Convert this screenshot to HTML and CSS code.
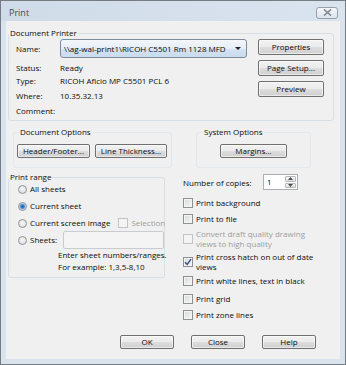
FILE: index.html
```html
<!DOCTYPE html>
<html lang="en">
<head>
    <meta charset="UTF-8">
    <meta name="viewport" content="width=device-width, initial-scale=1.0">
    <title>Print</title>
    <link rel="stylesheet" href="styles.css">
</head>
<body>
    <div class="window">
        <div class="titlebar">
            <span class="title">Print</span>
            <span class="close-btn">
                <svg width="9" height="7" viewBox="0 0 9 7"><path d="M1 0.5 L8 6.5 M8 0.5 L1 6.5" stroke="#7d8691" stroke-width="1.6" fill="none"/></svg>
            </span>
        </div>

        <div class="client">
            <fieldset class="group printer">
                <legend>Document Printer</legend>
                <div class="printer-body">
                    <div class="printer-info">
                        <span class="info-label name-label">Name:</span>
                        <div class="combo">
                            <span>\\ag-wal-print1\RICOH C5501 Rm 1128 MFD</span>
                            <span class="combo-arrow"></span>
                        </div>
                        <span class="info-label first">Status:</span><span class="info-value first">Ready</span>
                        <span class="info-label">Type:</span><span class="info-value">RICOH Aficio MP C5501 PCL 6</span>
                        <span class="info-label">Where:</span><span class="info-value">10.35.32.13</span>
                        <span class="info-label">Comment:</span><span class="info-value"></span>
                    </div>
                    <div class="printer-actions">
                        <button class="btn btn-side">Properties</button>
                        <button class="btn btn-side">Page Setup...</button>
                        <button class="btn btn-side">Preview</button>
                    </div>
                </div>
            </fieldset>

            <div class="options-row">
                <fieldset class="group doc-options">
                    <legend>Document Options</legend>
                    <button class="btn btn-header">Header/Footer...</button>
                    <button class="btn btn-thickness">Line Thickness...</button>
                </fieldset>
                <fieldset class="group sys-options">
                    <legend>System Options</legend>
                    <button class="btn btn-margins">Margins...</button>
                </fieldset>
            </div>

            <div class="lower">
                <fieldset class="group range">
                    <legend>Print range</legend>
                    <label class="radio-row"><span class="radio"></span>All sheets</label>
                    <label class="radio-row"><span class="radio checked"></span>Current sheet</label>
                    <label class="radio-row">
                        <span class="radio"></span>Current screen image
                        <span class="check disabled selection-box"></span><span class="muted">Selection</span>
                    </label>
                    <label class="radio-row sheets-row">
                        <span class="radio"></span>Sheets:
                        <span class="text-input"></span>
                    </label>
                    <p class="hint">Enter sheet numbers/ranges.<br>For example: 1,3,5-8,10</p>
                </fieldset>

                <div class="print-opts">
                    <div class="copies">
                        <span class="copies-label">Number of copies:</span>
                        <div class="spin">
                            <span class="spin-value">1</span>
                            <span class="spin-buttons">
                                <span class="spin-btn"><svg width="5" height="3" viewBox="0 0 5 3"><path d="M0 3 L2.5 0 L5 3 Z" fill="#4d4d4d"/></svg></span>
                                <span class="spin-btn"><svg width="5" height="3" viewBox="0 0 5 3"><path d="M0 0 L2.5 3 L5 0 Z" fill="#4d4d4d"/></svg></span>
                            </span>
                        </div>
                    </div>
                    <div class="check-list">
                        <label class="check-row"><span class="check"></span>Print background</label>
                        <label class="check-row"><span class="check"></span>Print to file</label>
                        <label class="check-row multi muted"><span class="check disabled"></span>Convert draft quality drawing views to high quality</label>
                        <label class="check-row multi">
                            <span class="check">
                                <svg width="8" height="8" viewBox="0 0 8 8"><path d="M1 4.2 L3.2 6.5 L7 1.2" stroke="#2c4c86" stroke-width="1.4" fill="none"/></svg>
                            </span>Print cross hatch on out of date views
                        </label>
                        <label class="check-row"><span class="check"></span>Print white lines, text in black</label>
                        <label class="check-row loose"><span class="check"></span>Print grid</label>
                        <label class="check-row"><span class="check"></span>Print zone lines</label>
                    </div>
                </div>
            </div>

            <div class="footer">
                <button class="btn btn-footer">OK</button>
                <button class="btn btn-footer">Close</button>
                <button class="btn btn-footer">Help</button>
            </div>
        </div>
    </div>
</body>
</html>
```

FILE: styles.css
```css
:root {
    --frame: #d9e3ee;
    --frame-edge: #767c84;
    --surface: #f0f0f0;
    --group-line: #d5dfe5;
    --text: #0a0a0a;
    --muted: #9d9d9d;
}

* {
    margin: 0;
    padding: 0;
    box-sizing: border-box;
}

body {
    font-family: "Open Sans", "Liberation Sans", sans-serif;
    font-size: 8px;
    color: var(--text);
    background: #fff;
}

.window {
    width: 346px;
    height: 365px;
    border: 1px solid var(--frame-edge);
    background: var(--frame);
    padding: 0 5px 5px;
    display: flex;
    flex-direction: column;
}

.titlebar {
    height: 20px;
    margin: 0 -5px;
    padding: 3px 7px 0 8px;
    display: flex;
    align-items: center;
    justify-content: space-between;
    background: linear-gradient(to right, #cfdbe8, #dae4ef);
}

.title {
    font-size: 9px;
    color: #454a50;
}

.close-btn {
    width: 22px;
    height: 12px;
    border: 1px solid #97a0aa;
    border-radius: 3px;
    background: linear-gradient(#f4f7fa, #dce4ec);
    display: flex;
    align-items: center;
    justify-content: center;
}

.client {
    flex: 1;
    background: var(--surface);
    padding: 0 6px 10px 2px;
    display: flex;
    flex-direction: column;
}

/* group boxes */
.group {
    border: 1px solid var(--group-line);
    border-radius: 3px;
    min-width: 0;
}

.group legend {
    line-height: 12px;
    padding: 0 1px;
}

.printer {
    margin-top: 6px;
    padding: 0 9px 2px 7px;
}

.printer legend {
    margin-left: -7px;
}

.printer-body {
    display: flex;
    justify-content: space-between;
}

.printer-info {
    display: grid;
    grid-template-columns: 44px 187px;
    grid-template-rows: 19px repeat(4, 15px);
    align-items: center;
}

.info-label.first,
.info-value.first {
    margin-top: 4px;
}

.combo {
    height: 19px;
    border: 1px solid #7d8b9b;
    border-radius: 3px;
    background: linear-gradient(#f4f7fb, #e6eef7 50%, #d5e3f2 50%, #c9dbee);
    display: flex;
    align-items: center;
    justify-content: space-between;
    padding: 0 5px 0 3px;
    white-space: nowrap;
}

.combo-arrow {
    width: 0;
    height: 0;
    border-left: 3px solid transparent;
    border-right: 3px solid transparent;
    border-top: 3px solid #222;
}

.printer-actions {
    display: flex;
    flex-direction: column;
    gap: 5px;
}

/* buttons */
.btn {
    font: inherit;
    color: var(--text);
    height: 14px;
    line-height: 12px;
    border: 1px solid #707070;
    border-radius: 2px;
    background: linear-gradient(#f2f2f2, #ebebeb 48%, #dddddd 52%, #cfcfcf);
    box-shadow: inset 0 0 0 1px rgba(255,255,255,0.55);
}

.btn-side {
    width: 66px;
    height: 16px;
}

.btn-header { width: 73px; }
.btn-thickness { width: 72px; margin-left: 5px; }
.btn-margins { width: 67px; }
.btn-footer { width: 54px; }

.options-row {
    display: flex;
    margin-top: 5px;
}

.doc-options,
.sys-options {
    border-color: #e2e8ec;
}

.doc-options {
    margin-left: 5px;
    width: 159px;
    padding: 6px 3px 9px 3px;
    display: flex;
}

.doc-options legend {
    margin-left: 2px;
}

.sys-options {
    margin-left: 24px;
    width: 115px;
    padding: 6px 0 9px;
    display: flex;
    justify-content: center;
}

.sys-options legend {
    margin-left: 6px;
}

/* print range */
.lower {
    display: flex;
    align-items: flex-start;
    margin-top: 3px;
}

.range {
    width: 157px;
    padding: 0 0 4px 9px;
    display: flex;
    flex-direction: column;
}

.range legend {
    margin-left: -9px;
}

.radio-row {
    display: flex;
    align-items: center;
    gap: 3px;
    line-height: 12px;
    margin-bottom: 5px;
    white-space: nowrap;
}

.radio {
    width: 9px;
    height: 9px;
    border: 1px solid #8f9296;
    border-radius: 50%;
    background: radial-gradient(circle at 50% 40%, #f6f6f6, #d9dadc);
    flex-shrink: 0;
}

.radio.checked {
    background: radial-gradient(circle, #1e5f9e 0, #3d7fc0 1.6px, #a9c8e6 3px, #e9eef3 3.6px, #d9dadc 100%);
}

.selection-box {
    margin-left: 5px;
}

.muted {
    color: var(--muted);
}

.sheets-row {
    margin-top: -3px;
    margin-bottom: 0;
}

.text-input {
    width: 108px;
    height: 18px;
    margin-left: 3px;
    border: 1px solid #c9cdd1;
    border-radius: 2px;
    background: #f4f4f4;
}

.hint {
    line-height: 12px;
    padding-left: 40px;
    white-space: nowrap;
}

/* right side options */
.print-opts {
    margin-left: 18px;
    padding-top: 3px;
}

.copies {
    display: flex;
    align-items: center;
}

.copies-label {
    width: 80px;
}

.spin {
    width: 35px;
    height: 16px;
    border: 1px solid #abadb3;
    background: #fff;
    display: flex;
    justify-content: space-between;
    padding: 1px 1px 1px 3px;
}

.spin-value {
    line-height: 12px;
}

.spin-buttons {
    width: 11px;
    display: flex;
    flex-direction: column;
    gap: 1px;
}

.spin-btn {
    flex: 1;
    border: 1px solid #b4b8be;
    border-radius: 1px;
    background: linear-gradient(#f7f7f7, #e0e0e0);
    display: flex;
    align-items: center;
    justify-content: center;
}

.check-list {
    margin-top: 7px;
    display: flex;
    flex-direction: column;
    gap: 4px;
}

.check-row {
    display: flex;
    align-items: center;
    gap: 3px;
    line-height: 12px;
    width: 137px;
}

.check-row.multi {
    line-height: 9.5px;
}

.check-row.loose {
    margin-top: 2px;
}

.check {
    width: 10px;
    height: 10px;
    border: 1px solid #8e8f8f;
    background: linear-gradient(135deg, #d6d9de, #f7f7f7);
    box-shadow: inset 0 0 0 1px #f4f4f4;
    flex-shrink: 0;
    display: flex;
    align-items: center;
    justify-content: center;
}

.check.disabled {
    border-color: #c4c4c4;
    background: #f4f4f4;
    box-shadow: none;
}

/* footer */
.footer {
    margin-top: auto;
    display: flex;
    justify-content: flex-end;
    gap: 17px;
    padding-right: 18px;
}
```
